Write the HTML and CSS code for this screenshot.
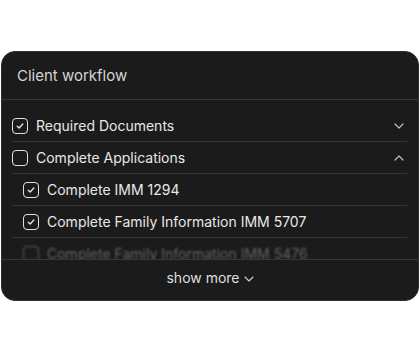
FILE: index.html
```html
<!DOCTYPE html>
<html>
  <head>
    <title>Client workflow</title>
    <link rel="stylesheet" href="styles.css">
  </head>
  <body>
    <div class="card">
      <div class="card-header">Client workflow</div>
      <div class="list">
        <div class="row">
          <span class="check checked">
            <svg viewBox="0 0 10 10" width="10" height="10"><path d="M2.2 5.2 L4.2 7 L7.8 3" fill="none" stroke="#e8e8e8" stroke-width="1.3" stroke-linecap="round" stroke-linejoin="round"/></svg>
          </span>
          <span class="label">Required Documents</span>
          <svg class="chevron" viewBox="0 0 10 6" width="10" height="6"><path d="M1 1 L5 5 L9 1" fill="none" stroke="#bdbdbd" stroke-width="1.2" stroke-linecap="round" stroke-linejoin="round"/></svg>
        </div>
        <div class="row">
          <span class="check"></span>
          <span class="label">Complete Applications</span>
          <svg class="chevron" viewBox="0 0 10 6" width="10" height="6"><path d="M1 5 L5 1 L9 5" fill="none" stroke="#bdbdbd" stroke-width="1.2" stroke-linecap="round" stroke-linejoin="round"/></svg>
        </div>
        <div class="row sub">
          <span class="check checked">
            <svg viewBox="0 0 10 10" width="10" height="10"><path d="M2.2 5.2 L4.2 7 L7.8 3" fill="none" stroke="#e8e8e8" stroke-width="1.3" stroke-linecap="round" stroke-linejoin="round"/></svg>
          </span>
          <span class="label">Complete IMM 1294</span>
        </div>
        <div class="row sub">
          <span class="check checked">
            <svg viewBox="0 0 10 10" width="10" height="10"><path d="M2.2 5.2 L4.2 7 L7.8 3" fill="none" stroke="#e8e8e8" stroke-width="1.3" stroke-linecap="round" stroke-linejoin="round"/></svg>
          </span>
          <span class="label">Complete Family Information IMM 5707</span>
        </div>
        <div class="row sub faded">
          <span class="check"></span>
          <span class="label">Complete Family Information IMM 5476</span>
        </div>
      </div>
      <div class="card-footer">
        <span>show more</span>
        <svg viewBox="0 0 10 6" width="10" height="6"><path d="M1 1 L5 5 L9 1" fill="none" stroke="#d0d0d0" stroke-width="1.1" stroke-linecap="round" stroke-linejoin="round"/></svg>
      </div>
    </div>
  </body>
</html>
```

FILE: styles.css
```css
body {
  margin: 0;
  padding: 51px 1px 0;
  background: #fff;
  font-family: Inter, "Liberation Sans", sans-serif;
}

.card {
  background: #1b1b1b;
  border: 1px solid #2c2c2c;
  border-radius: 14px;
  height: 250px;
  display: flex;
  flex-direction: column;
  overflow: hidden;
  box-sizing: border-box;
}

.card-header {
  height: 47px;
  padding-left: 15px;
  display: flex;
  align-items: center;
  font-size: 15px;
  color: #d4d4d4;
  border-bottom: 1px solid #383838;
  flex-shrink: 0;
}

.list {
  height: 159px;
  padding-top: 10px;
  box-sizing: border-box;
  overflow: hidden;
  flex-shrink: 0;
}

.row {
  height: 31px;
  margin: 0 11px 0 10px;
  padding-right: 3px;
  display: flex;
  align-items: center;
  gap: 8px;
  border-bottom: 1px solid #353535;
  font-size: 14px;
  color: #e8e8e8;
}

.row.sub {
  padding-left: 11px;
}

.row .label {
  flex: 1;
}

.check {
  width: 16px;
  height: 16px;
  box-sizing: border-box;
  border: 1.5px solid #e2e2e2;
  border-radius: 4px;
  display: flex;
  align-items: center;
  justify-content: center;
  flex-shrink: 0;
}

.chevron {
  flex-shrink: 0;
}

.faded {
  filter: blur(1.2px);
  opacity: 0.35;
}

.card-footer {
  flex: 1;
  border-top: 1px solid #383838;
  display: flex;
  justify-content: center;
  align-items: flex-start;
  padding-top: 9px;
  gap: 4px;
  font-size: 14px;
  color: #dedede;
}

.card-footer svg {
  margin-top: 7px;
}
```
